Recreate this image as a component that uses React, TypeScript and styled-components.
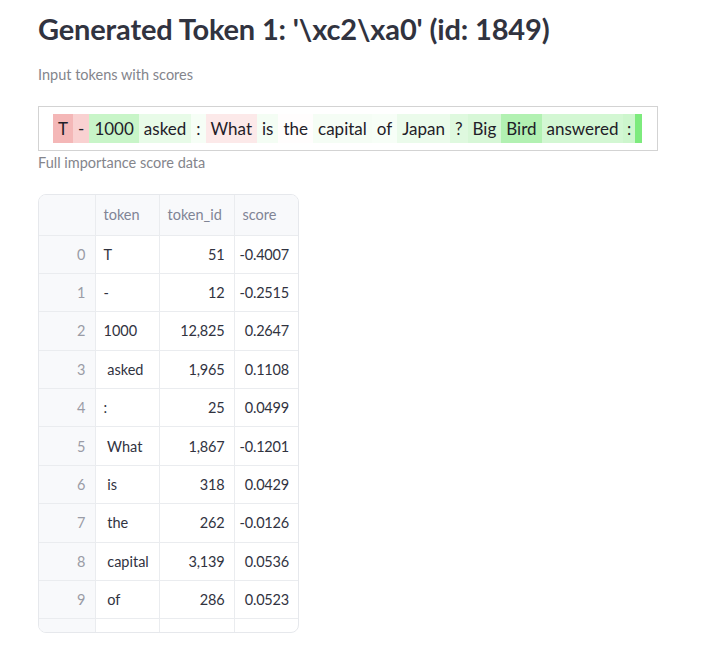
import React from 'react';
import styled, { createGlobalStyle } from 'styled-components';

const GlobalStyle = createGlobalStyle`
  body {
    margin: 0;
    background: #fff;
    font-family: Lato, "Noto Sans", sans-serif;
    color: #31333f;
  }
`;

type Token = { text: string; bg: string; tight?: boolean };

const tokens: Token[] = [
  { text: 'T', bg: '#f4b7b7' },
  { text: '-', bg: '#f9d1d1' },
  { text: '1000', bg: '#c8f5c8' },
  { text: 'asked', bg: '#e8fbe8' },
  { text: ':', bg: '#f6fef6' },
  { text: 'What', bg: '#fce9e9' },
  { text: 'is', bg: '#f4fdf4' },
  { text: 'the', bg: '#fffdfd' },
  { text: 'capital', bg: '#f5fdf5' },
  { text: 'of', bg: '#f7fef7' },
  { text: 'Japan', bg: '#ebfbeb' },
  { text: '?', bg: '#dff9df' },
  { text: 'Big', bg: '#d7f7d7' },
  { text: 'Bird', bg: '#b2f1b2' },
  { text: 'answered', bg: '#d3f7d3' },
  { text: ':', bg: '#cdf6cd', tight: true },
  { text: '', bg: '#7deb7d', tight: true },
];

type Row = { token: string; id: string; score: string };

const rows: Row[] = [
  { token: 'T', id: '51', score: '-0.4007' },
  { token: '-', id: '12', score: '-0.2515' },
  { token: '1000', id: '12,825', score: '0.2647' },
  { token: ' asked', id: '1,965', score: '0.1108' },
  { token: ':', id: '25', score: '0.0499' },
  { token: ' What', id: '1,867', score: '-0.1201' },
  { token: ' is', id: '318', score: '0.0429' },
  { token: ' the', id: '262', score: '-0.0126' },
  { token: ' capital', id: '3,139', score: '0.0536' },
  { token: ' of', id: '286', score: '0.0523' },
  { token: '', id: '', score: '' },
];

// column widths of the dataframe, index first
const colWidths = [56, 64, 75, 64];

const App = () => {
  return (
    <>
      <GlobalStyle />
      <Page>
        <Title>Generated Token 1: '\xc2\xa0' (id: 1849)</Title>
        <Caption>Input tokens with scores</Caption>
        <TokenBox>
          {tokens.map((t, i) => (
            <TokenSpan key={i} $bg={t.bg} $tight={t.tight}>
              {t.text}
            </TokenSpan>
          ))}
        </TokenBox>
        <Caption $tight>Full importance score data</Caption>
        <Frame>
          <Grid>
            <colgroup>
              {colWidths.map((w, i) => (
                <Col key={i} $w={w} />
              ))}
            </colgroup>
            <thead>
              <HeadRow>
                <IndexHead />
                <HeadCell>token</HeadCell>
                <HeadCell>token_id</HeadCell>
                <HeadCell>score</HeadCell>
              </HeadRow>
            </thead>
            <tbody>
              {rows.map((r, i) => (
                <BodyRow key={i}>
                  <IndexCell>{r.id ? i : ''}</IndexCell>
                  <Cell>{r.token}</Cell>
                  <Cell $num>{r.id}</Cell>
                  <Cell $num>{r.score}</Cell>
                </BodyRow>
              ))}
            </tbody>
          </Grid>
        </Frame>
      </Page>
    </>
  );
};

const Page = styled.div`
  display: flex;
  flex-direction: column;
  align-items: flex-start;
  padding: 10px 38px 0;
`;

const Title = styled.h1`
  margin: 0;
  font-size: 29px;
  font-weight: 700;
  line-height: 38px;
  color: #31333f;
  letter-spacing: -0.15px;
`;

const Caption = styled.div<{ $tight?: boolean }>`
  margin-top: ${(p) => (p.$tight ? '2px' : '17px')};
  font-size: 14.5px;
  line-height: 20px;
  color: #84858c;
`;

const TokenBox = styled.div`
  margin-top: 21px;
  width: 620px;
  box-sizing: border-box;
  border: 1px solid #d3d3d3;
  padding: 7px 14px;
  display: flex;
  flex-wrap: wrap;
`;

const TokenSpan = styled.span<{ $bg: string; $tight?: boolean }>`
  display: inline-block;
  background: ${(p) => p.$bg};
  padding: ${(p) => (p.$tight ? '0 3.5px' : '0 5px')};
  font-size: 17px;
  line-height: 29px;
  height: 29px;
  color: #1f2028;
  white-space: pre;
`;

const Frame = styled.div`
  margin-top: 21px;
  width: 261px;
  height: 439px;
  box-sizing: border-box;
  border: 1px solid #e6e8ec;
  border-radius: 8px;
  overflow: hidden;
`;

const Grid = styled.table`
  border-collapse: collapse;
  table-layout: fixed;
  width: 259px;
  font-size: 14.5px;
`;

const Col = styled.col<{ $w: number }>`
  width: ${(p) => p.$w}px;
`;

const HeadRow = styled.tr`
  height: 40px;
`;

const BodyRow = styled.tr`
  height: 38.4px;
`;

const BaseCell = styled.td`
  border-right: 1px solid #eaecef;
  border-bottom: 1px solid #eaecef;
  padding: 0 9px 0 8px;
  white-space: pre;
  overflow: hidden;
  &:last-child {
    border-right: none;
  }
`;

const IndexHead = styled(BaseCell).attrs({ as: 'th' })`
  background: #f8f9fb;
`;

const HeadCell = styled(BaseCell).attrs({ as: 'th' })`
  background: #f8f9fb;
  color: #808495;
  font-weight: 400;
  text-align: left;
`;

const IndexCell = styled(BaseCell)`
  background: #f8f9fb;
  color: #9a9ca6;
  text-align: right;
`;

const Cell = styled(BaseCell)<{ $num?: boolean }>`
  color: #31333f;
  text-align: ${(p) => (p.$num ? 'right' : 'left')};
  padding-left: ${(p) => (p.$num ? '2px' : '8px')};
  letter-spacing: ${(p) => (p.$num ? '-0.2px' : '0')};
`;

export default App;
